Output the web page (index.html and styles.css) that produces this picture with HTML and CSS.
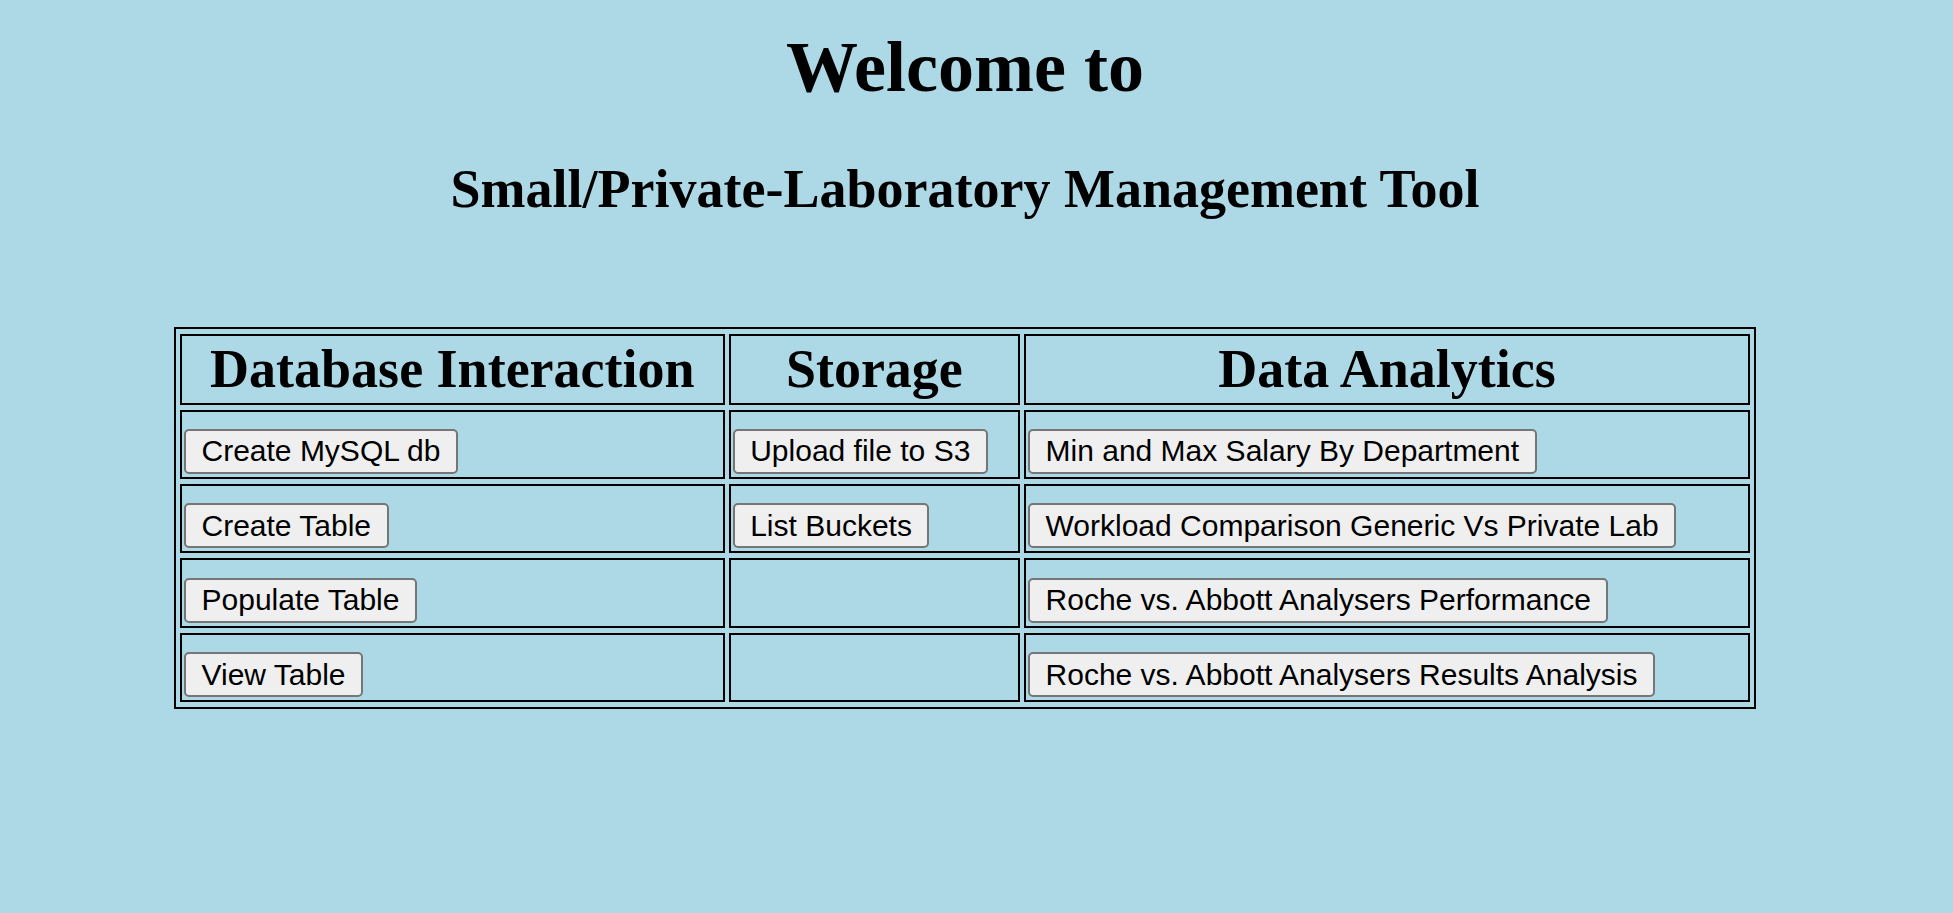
FILE: index.html
```html
<!DOCTYPE html>
<html>
<head>
<meta charset="utf-8">
<title>Small/Private-Laboratory Management Tool</title>
<link rel="stylesheet" href="styles.css">
</head>
<body>
<h1 class="title">Welcome to</h1>
<h2 class="subtitle">Small/Private-Laboratory Management Tool</h2>
<table class="menu">
  <thead>
    <tr>
      <th class="col-db">Database Interaction</th>
      <th class="col-st">Storage</th>
      <th class="col-da">Data Analytics</th>
    </tr>
  </thead>
  <tbody>
    <tr>
      <td><button class="btn">Create MySQL db</button></td>
      <td><button class="btn">Upload file to S3</button></td>
      <td><button class="btn">Min and Max Salary By Department</button></td>
    </tr>
    <tr>
      <td><button class="btn">Create Table</button></td>
      <td><button class="btn">List Buckets</button></td>
      <td><button class="btn">Workload Comparison Generic Vs Private Lab</button></td>
    </tr>
    <tr>
      <td><button class="btn">Populate Table</button></td>
      <td></td>
      <td><button class="btn">Roche vs. Abbott Analysers Performance</button></td>
    </tr>
    <tr>
      <td><button class="btn">View Table</button></td>
      <td></td>
      <td><button class="btn">Roche vs. Abbott Analysers Results Analysis</button></td>
    </tr>
  </tbody>
</table>
</body>
</html>
```

FILE: styles.css
```css
html, body {
  background: #add8e6;
}
body {
  margin: 0;
  padding: 26px 41px 40px 18px;
  font-family: "Liberation Serif", "Times New Roman", serif;
  color: #000;
}
.title {
  margin: 0 0 48.5px;
  font-size: 72px;
  line-height: 83px;
  font-weight: bold;
  text-align: center;
}
.subtitle {
  margin: 0 0 107px;
  font-size: 54px;
  line-height: 62px;
  font-weight: bold;
  text-align: center;
}
.menu {
  width: 1582px;
  margin: 0 auto;
  table-layout: fixed;
  border: 2px solid #000;
  border-collapse: separate;
  border-spacing: 4px 5px;
}
.menu th,
.menu td {
  box-sizing: border-box;
  height: 69.4px;
  border: 2px solid #000;
  padding: 2px 2px 3px;
}
.menu th {
  font-size: 54px;
  line-height: 62px;
  font-weight: bold;
  text-align: center;
  vertical-align: middle;
}
.menu td {
  vertical-align: bottom;
  text-align: left;
}
.col-db { width: 544px; }
.col-st { width: 291px; }
.col-da { width: 725px; }
.btn {
  display: block;
  box-sizing: border-box;
  height: 45px;
  margin: 0;
  padding: 0 15.5px;
  font-family: "Liberation Sans", Arial, sans-serif;
  font-size: 30px;
  line-height: 34px;
  color: #000;
  background: #efefef;
  border: 2px solid #767676;
  border-radius: 5px;
  white-space: nowrap;
}
```
